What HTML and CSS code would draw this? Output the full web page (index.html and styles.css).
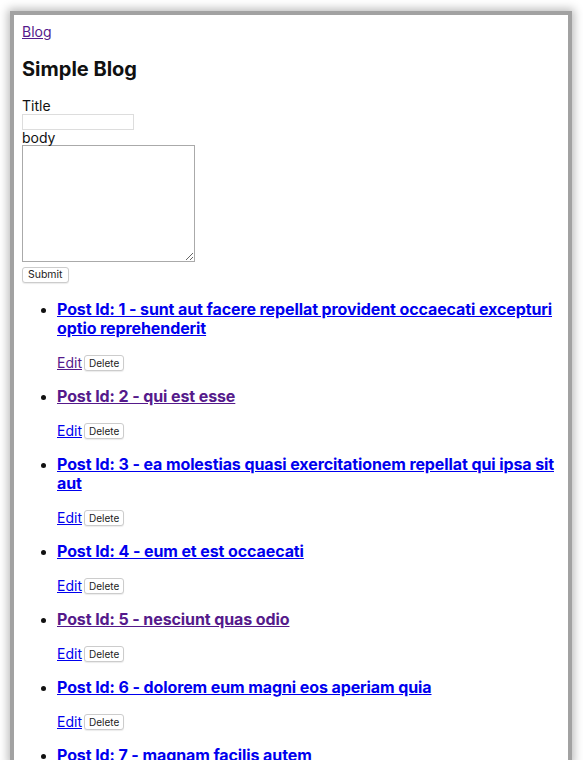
FILE: index.html
```html
<!DOCTYPE html>
<html>
<head>
	<title>Simple Blog</title>
	<link rel="stylesheet" href="styles.css">
</head>
<body>
  <div class="window">
    <div class="page">
      <a class="visited" href="#">Blog</a>
      <h1>Simple Blog</h1>

      <form class="post-form">
        <label for="title">Title</label>
        <input id="title" type="text" />
        <label for="body">body</label>
        <textarea id="body"></textarea>
        <button class="btn" type="button">Submit</button>
      </form>

      <ul class="posts">
        <li>
          <h3><a href="#">Post Id: 1 - sunt aut facere repellat provident occaecati excepturi optio reprehenderit</a></h3>
          <div class="actions"><a class="visited" href="#">Edit</a><button class="btn">Delete</button></div>
        </li>
        <li>
          <h3><a class="visited" href="#">Post Id: 2 - qui est esse</a></h3>
          <div class="actions"><a href="#">Edit</a><button class="btn">Delete</button></div>
        </li>
        <li>
          <h3><a href="#">Post Id: 3 - ea molestias quasi exercitationem repellat qui ipsa sit aut</a></h3>
          <div class="actions"><a href="#">Edit</a><button class="btn">Delete</button></div>
        </li>
        <li>
          <h3><a href="#">Post Id: 4 - eum et est occaecati</a></h3>
          <div class="actions"><a href="#">Edit</a><button class="btn">Delete</button></div>
        </li>
        <li>
          <h3><a class="visited" href="#">Post Id: 5 - nesciunt quas odio</a></h3>
          <div class="actions"><a href="#">Edit</a><button class="btn">Delete</button></div>
        </li>
        <li>
          <h3><a href="#">Post Id: 6 - dolorem eum magni eos aperiam quia</a></h3>
          <div class="actions"><a href="#">Edit</a><button class="btn">Delete</button></div>
        </li>
        <li>
          <h3><a href="#">Post Id: 7 - magnam facilis autem</a></h3>
        </li>
      </ul>
    </div>
  </div>
</body>
</html>
```

FILE: styles.css
```css
html, body{
	margin:0;
	background:#fff;
}

.window{
	margin:15px 0 0 14px;
	width:554px;
	height:745px;
	overflow:hidden;
	background:#fff;
	box-shadow:0 0 0 4px #a2a2a2, 0 0 9px 6px rgba(0,0,0,.28);
}

	.page{
		padding:8px;
		font-family:Inter, "Liberation Sans", sans-serif;
		font-size:14px;
		color:#111;
	}

		a{
			color:#0000ee;
		}

		a.visited{
			color:#551a8b;
		}

		h1{
			font-size:20px;
			margin:17px 0 16px;
		}

		.post-form label{
			display:block;
			line-height:17px;
		}

		.post-form label[for="body"]{
			line-height:15px;
		}

		.post-form input{
			display:block;
			width:108px;
			height:12px;
			border:1px solid #ddd;
			padding:1px;
			margin:0;
		}

		.post-form textarea{
			display:block;
			width:167px;
			height:111px;
			border:1px solid #aaa;
			padding:2px;
			margin:0;
			resize:both;
		}

		.btn{
			font-family:Inter, "Liberation Sans", sans-serif;
			font-size:10px;
			line-height:12px;
			padding:1px 4px;
			background:#fff;
			border:1px solid #ccc;
			border-radius:3px;
			color:#222;
			box-shadow:0 1px 1px rgba(0,0,0,.08);
		}

		.post-form .btn{
			margin-top:5px;
			font-size:10.5px;
			padding:1px 5px;
		}

		.posts{
			margin:17px 0 0;
			padding-left:35px;
		}

			.posts h3{
				font-size:16px;
				line-height:19px;
				letter-spacing:-0.1px;
				margin:15px 0;
			}

			.actions{
				font-size:14px;
				line-height:19px;
			}

			.actions .btn{
				margin-left:2px;
				vertical-align:1px;
			}
```
